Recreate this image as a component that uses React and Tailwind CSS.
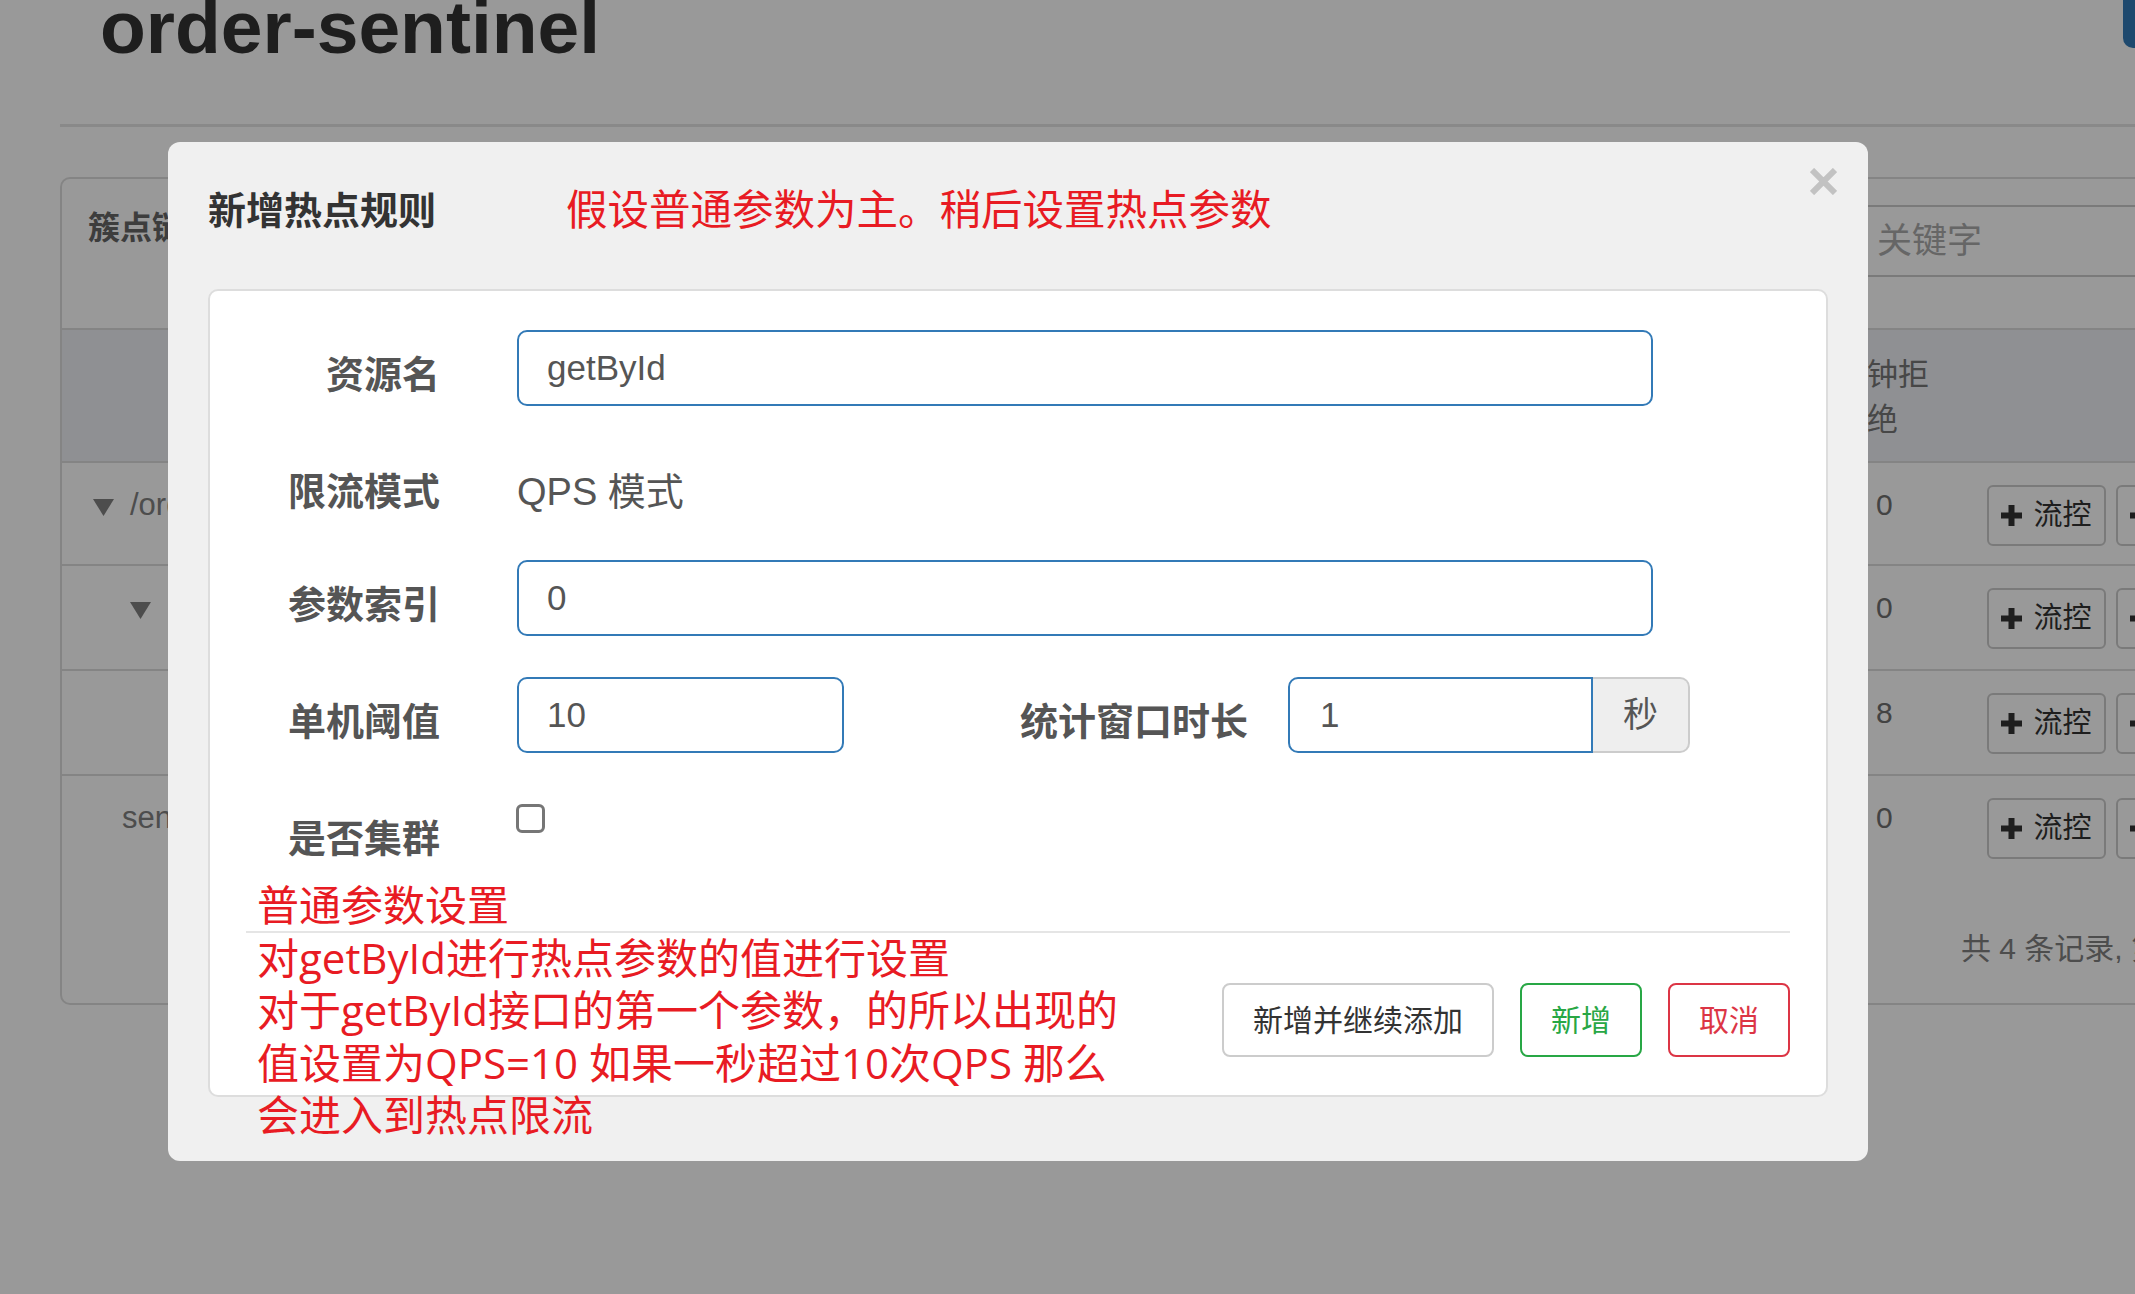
import React from "react";

const FONT = "font-['Liberation_Sans','Noto_Sans_CJK_SC',sans-serif]";

const rows = [
  { h: "h-[103px]", indent: "pl-[31px]", caret: true, name: "/order/findById", value: "0" },
  { h: "h-[105px]", indent: "pl-[68px]", caret: true, name: "", value: "0" },
  { h: "h-[105px]", indent: "pl-[140px]", caret: false, name: "getById", value: "8" },
  { h: "h-[106px]", indent: "pl-[60px]", caret: false, name: "sentinel_spring_web_context", value: "0", last: true }
];

function Caret() {
  return (
    <svg width="21" height="17" viewBox="0 0 21 17" className="mr-[16px] mt-[4px] shrink-0">
      <polygon points="0,0 21,0 10.5,17" fill="#808080" />
    </svg>
  );
}

function PlusIcon() {
  return (
    <svg width="21" height="21" viewBox="0 0 21 21" className="shrink-0">
      <path d="M7.5 0h6v7.5h7.5v6h-7.5v7.5h-6v-7.5h-7.5v-6h7.5z" fill="#333" />
    </svg>
  );
}

function RowButton({ label }) {
  return (
    <div className="flex h-[61px] w-[119px] shrink-0 items-center justify-center gap-[11px] rounded-[6px] border-2 border-[#ccc] bg-white text-[29px] text-[#333]">
      <PlusIcon />
      <span>{label}</span>
    </div>
  );
}

function Page() {
  return (
    <div className="pl-[60px]">
      {/* TITLE */}
      <div className="flex w-[2175px] items-start justify-between">
        <h1 className="ml-[40px] mt-[-10px] text-[75px] font-bold leading-[74px] text-[#333]">
          order-sentinel
        </h1>
        <div className="mt-[-10px] h-[58px] w-[112px] rounded-b-[10px] bg-[#337ab7]" />
      </div>

      <div className="mt-[60px] w-[2200px] border-t-[3px] border-[#e5e5e5]" />

      {/* CARD */}
      <div className="mt-[50px] w-[2300px] rounded-[10px] border-2 border-[#ddd]">
        <div className="flex h-[151px] items-start border-b-2 border-[#ddd] pt-[26px]">
          <div className="w-[1786px] shrink-0 pl-[26px] text-[32px] font-bold leading-[46px] text-[#666]">
            簇点链路
          </div>
          <input
            readOnly
            placeholder="关键字"
            className="h-[72px] w-[500px] rounded-[8px] border-2 border-[#ccc] bg-white pl-[27px] text-[35px] text-[#555] outline-none placeholder:text-[#aaa]"
          />
        </div>

        {/* TABLE HEAD */}
        <div className="grid h-[133px] grid-cols-[1774px_139px_1fr] border-b-2 border-[#ddd] bg-[#eef0f5] pt-[22px] text-[31px] leading-[45px] text-[#777]">
          <div />
          <div className="whitespace-nowrap">
            <div>分钟拒</div>
            <div className="pl-[31px]">绝</div>
          </div>
          <div />
        </div>

        {/* TABLE BODY */}
        {rows.map((r, i) => (
          <div
            key={i}
            className={`grid grid-cols-[1774px_139px_1fr] ${r.h} ${r.last ? "" : "border-b-2 border-[#ddd]"}`}
          >
            <div className={`flex h-[64px] items-center self-start ${r.indent} pt-[20px] text-[31px] leading-[44px] text-[#808080]`}>
              {r.caret && <Caret />}
              <span className="whitespace-nowrap">{r.name}</span>
            </div>
            <div className="pl-[40px] pt-[20px] text-[30px] leading-[44px] text-[#707070]">
              {r.value}
            </div>
            <div className="flex gap-[10px] pl-[12px] pt-[22px]">
              <RowButton label="流控" />
              <RowButton label="降级" />
              <RowButton label="热点" />
            </div>
          </div>
        ))}

        <div className="whitespace-nowrap pb-[32px] pl-[1899px] pt-[45px] text-[30px] leading-[44px] text-[#808080]">
          共 4 条记录, 第 1 / 1 页
        </div>
      </div>
    </div>
  );
}

function Label({ children, className = "" }) {
  return (
    <div
      className={`shrink-0 pt-[17px] text-right text-[38px] font-bold leading-[56px] text-[#555] ${className}`}
    >
      {children}
    </div>
  );
}

function Modal() {
  return (
    <div className="absolute left-[168px] top-[142px] w-[1700px] rounded-[12px] bg-[#f0f0f0] px-[40px] pb-[64px]">
      {/* CLOSE */}
      <button className="absolute right-[31px] top-[26px]">
        <svg width="27" height="27" viewBox="0 0 27 27">
          <path d="M2 2L25 25M25 2L2 25" stroke="#c2c2c2" strokeWidth="6" />
        </svg>
      </button>

      {/* HEADER */}
      <div className="flex items-center pt-[43px]">
        <div className="w-[358px] shrink-0 text-[38px] font-bold leading-[52px] text-[#333]">
          新增热点规则
        </div>
        <div className="text-[41.5px] leading-[52px] text-[#e81b23]">
          假设普通参数为主。稍后设置热点参数
        </div>
      </div>

      {/* PANEL */}
      <div className="mt-[52px] rounded-[10px] border-2 border-[#ddd] bg-white px-[36px] pb-[38px] pt-[39px]">
        <div className="mb-[41px] flex">
          <Label className="w-[194px]">资源名</Label>
          <div className="ml-[77px] flex h-[76px] w-[1136px] items-center rounded-[10px] border-2 border-[#337ab7] px-[28px] text-[35px] text-[#555]">
            getById
          </div>
        </div>

        <div className="mb-[40px] flex">
          <Label className="w-[194px]">限流模式</Label>
          <div className="ml-[77px] pt-[17px] text-[38px] leading-[56px] text-[#555]">QPS 模式</div>
        </div>

        <div className="mb-[41px] flex">
          <Label className="w-[194px]">参数索引</Label>
          <div className="ml-[77px] flex h-[76px] w-[1136px] items-center rounded-[10px] border-2 border-[#337ab7] px-[28px] text-[35px] text-[#555]">
            0
          </div>
        </div>

        <div className="mb-[41px] flex">
          <Label className="w-[194px]">单机阈值</Label>
          <div className="ml-[77px] flex h-[76px] w-[327px] shrink-0 items-center rounded-[10px] border-2 border-[#337ab7] px-[28px] text-[35px] text-[#555]">
            10
          </div>
          <Label className="ml-[176px]">统计窗口时长</Label>
          <div className="ml-[40px] flex">
            <div className="flex h-[76px] w-[305px] items-center rounded-l-[10px] border-2 border-[#337ab7] px-[30px] text-[35px] text-[#555]">
              1
            </div>
            <div className="flex h-[76px] w-[97px] items-center justify-center rounded-r-[10px] border-2 border-l-0 border-[#ccc] bg-[#eee] text-[35px] text-[#555]">
              秒
            </div>
          </div>
        </div>

        <div className="flex">
          <Label className="w-[194px]">是否集群</Label>
          <div className="ml-[76px] mt-[10px] h-[29px] w-[29px] rounded-[6px] border-[3px] border-[#767676] bg-white" />
        </div>

        {/* FOOTER */}
        <div className="mt-[64px] border-t-2 border-[#e5e5e5] pt-[50px]">
          <div className="flex justify-end gap-[26px]">
            <button className="h-[74px] rounded-[8px] border-2 border-[#ccc] bg-white px-[29px] text-[30px] text-[#333]">
              新增并继续添加
            </button>
            <button className="h-[74px] rounded-[8px] border-2 border-[#28a745] bg-white px-[29px] text-[30px] text-[#28a745]">
              新增
            </button>
            <button className="h-[74px] rounded-[8px] border-2 border-[#dc3545] bg-white px-[29px] text-[30px] text-[#dc3545]">
              取消
            </button>
          </div>
        </div>
      </div>

      {/* ANNOTATION */}
      <div className="absolute left-[89px] top-[737px] whitespace-nowrap font-['Open_Sans','Noto_Sans_CJK_SC',sans-serif] text-[42px] leading-[52.5px] text-[#e81b23]">
        <div>普通参数设置</div>
        <div>对getById进行热点参数的值进行设置</div>
        <div>对于getById接口的第一个参数，的所以出现的</div>
        <div>值设置为QPS=10 如果一秒超过10次QPS 那么</div>
        <div>会进入到热点限流</div>
      </div>
    </div>
  );
}

export default function App() {
  return (
    <div className={`relative h-[1294px] w-[2135px] overflow-hidden bg-white ${FONT}`}>
      <Page />
      <div className="absolute inset-0 bg-black/40" />
      <Modal />
    </div>
  );
}
